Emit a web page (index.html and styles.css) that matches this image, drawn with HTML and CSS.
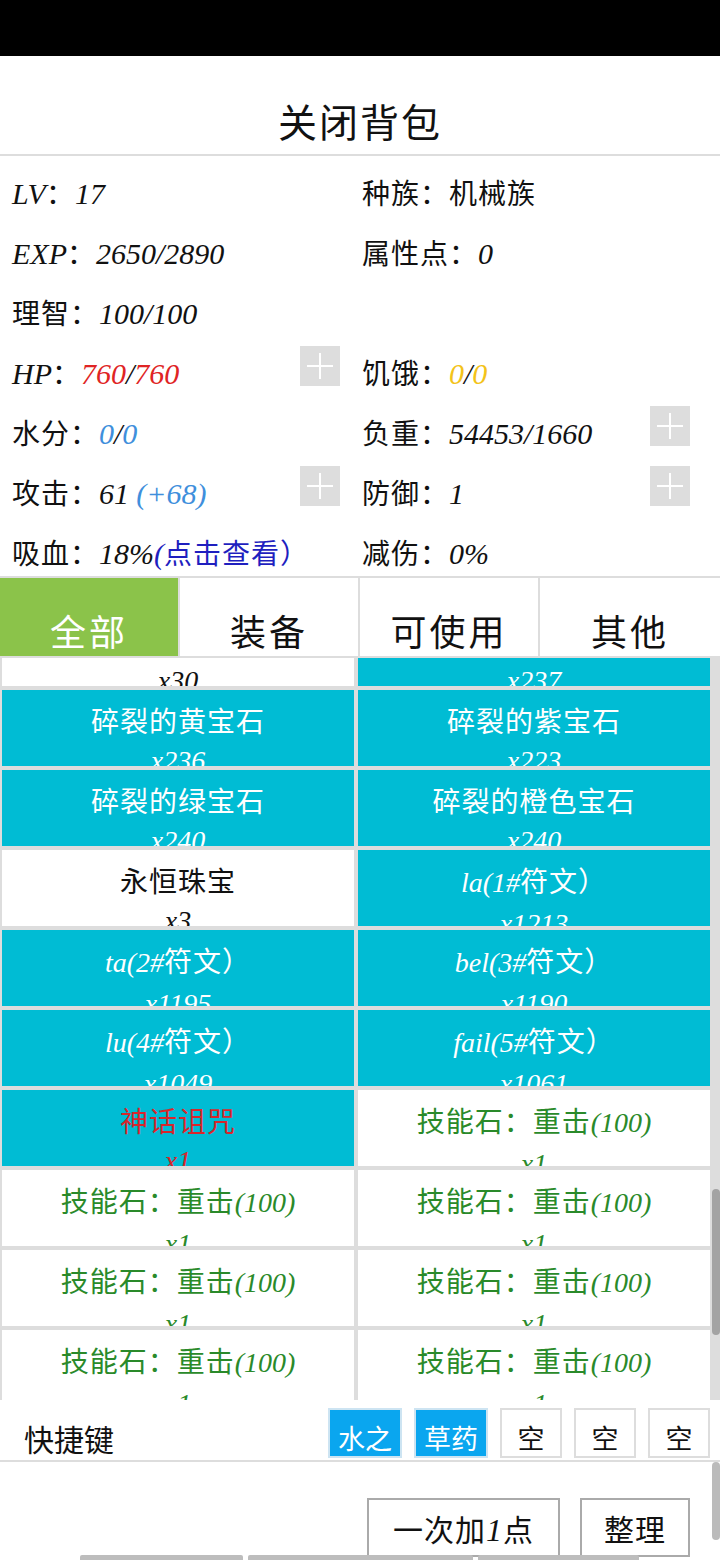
FILE: index.html
```html
<!DOCTYPE html>
<html lang="zh-CN">
<head>
  <meta charset="UTF-8">
  <title>背包</title>
  <link rel="stylesheet" href="styles.css">
</head>
<body>

<div class="statusbar"></div>

<div class="title">关闭背包</div>

<div class="stats">
  <div class="stat"><span class="text"><i>LV</i>：<i>17</i></span></div>
  <div class="stat right"><span class="text">种族：机械族</span></div>

  <div class="stat"><span class="text"><i>EXP</i>：<i>2650/2890</i></span></div>
  <div class="stat right"><span class="text">属性点：<i>0</i></span></div>

  <div class="stat"><span class="text">理智：<i>100/100</i></span></div>
  <div class="stat right"></div>

  <div class="stat">
    <span class="text"><i>HP</i>：<i class="red">760</i><i>/</i><i class="red">760</i></span>
    <span class="plus"><svg viewBox="0 0 40 40"><path d="M20 7v26M7 20h26" stroke="#fff" stroke-width="2"/></svg></span>
  </div>
  <div class="stat right"><span class="text">饥饿：<i class="yellow">0</i><i>/</i><i class="yellow">0</i></span></div>

  <div class="stat"><span class="text">水分：<i class="blue">0</i><i>/</i><i class="blue">0</i></span></div>
  <div class="stat right">
    <span class="text">负重：<i>54453/1660</i></span>
    <span class="plus"><svg viewBox="0 0 40 40"><path d="M20 7v26M7 20h26" stroke="#fff" stroke-width="2"/></svg></span>
  </div>

  <div class="stat">
    <span class="text">攻击：<i>61</i> <i class="blue">(+68)</i></span>
    <span class="plus"><svg viewBox="0 0 40 40"><path d="M20 7v26M7 20h26" stroke="#fff" stroke-width="2"/></svg></span>
  </div>
  <div class="stat right">
    <span class="text">防御：<i>1</i></span>
    <span class="plus"><svg viewBox="0 0 40 40"><path d="M20 7v26M7 20h26" stroke="#fff" stroke-width="2"/></svg></span>
  </div>

  <div class="stat"><span class="text">吸血：<i>18%</i><span class="link"><i>(</i>点击查看）</span></span></div>
  <div class="stat right"><span class="text">减伤：<i>0%</i></span></div>
</div>

<div class="tabs">
  <div class="tab active">全部</div>
  <div class="tab">装备</div>
  <div class="tab">可使用</div>
  <div class="tab">其他</div>
</div>

<div class="list-wrap">
  <div class="list" id="itemList"></div>
  <div class="track"><div class="thumb" id="listThumb"></div></div>
</div>

<div class="hotkeys">
  <span class="hotkey-label">快捷键</span>
  <span class="key on">水之</span>
  <span class="key on">草药</span>
  <span class="key">空</span>
  <span class="key">空</span>
  <span class="key">空</span>
</div>

<div class="bottom-wrap">
  <div class="bottom" id="bottomPane">
    <div class="actions">
      <button class="btn">一次加<i>1</i>点</button>
      <button class="btn short">整理</button>
    </div>
    <div class="bars">
      <span class="bar b1"></span>
      <span class="bar b2"></span>
      <span class="bar b3"></span>
    </div>
  </div>
  <div class="track"><div class="thumb light" id="bottomThumb"></div></div>
</div>

<script>
const items = [];

// 前面的物品（已滚动出视野）
const older = ["技能石：重击(100)", "技能石：格挡(100)", "技能石：闪避(100)"];
for (let i = 0; i < 66; i++) {
  items.push({ name: older[i % 3], count: 1, cls: "skill" });
}

items.push(
  { name: "强化石", count: 30, cls: "plain" },
  { name: "碎裂的红宝石", count: 237, cls: "gem" },
  { name: "碎裂的黄宝石", count: 236, cls: "gem" },
  { name: "碎裂的紫宝石", count: 223, cls: "gem" },
  { name: "碎裂的绿宝石", count: 240, cls: "gem" },
  { name: "碎裂的橙色宝石", count: 240, cls: "gem" },
  { name: "永恒珠宝", count: 3, cls: "plain" },
  { name: "la(1#符文）", count: 1213, cls: "gem" },
  { name: "ta(2#符文）", count: 1195, cls: "gem" },
  { name: "bel(3#符文）", count: 1190, cls: "gem" },
  { name: "lu(4#符文）", count: 1049, cls: "gem" },
  { name: "fail(5#符文）", count: 1061, cls: "gem" },
  { name: "神话诅咒", count: 1, cls: "curse" }
);

for (let i = 0; i < 15; i++) {
  items.push({ name: "技能石：重击(100)", count: 1, cls: "skill" });
}

function latin(text) {
  return text.replace(/[A-Za-z0-9#()%+\/]+/g, "<i>$&</i>");
}

const list = document.getElementById("itemList");
items.forEach(item => {
  const cell = document.createElement("div");
  cell.className = "cell " + item.cls;
  cell.innerHTML = `<div class="name">${latin(item.name)}</div><div class="count"><i>x${item.count}</i></div>`;
  list.appendChild(cell);
});

function syncThumb(pane, thumb) {
  const track = thumb.parentNode.clientHeight;
  const size = Math.round(track * pane.clientHeight / pane.scrollHeight);
  const range = pane.scrollHeight - pane.clientHeight;
  const top = range > 0 ? Math.round(pane.scrollTop / range * (track - size)) : 0;
  thumb.style.height = size + "px";
  thumb.style.top = top + "px";
}

// 停在上次浏览的位置
list.scrollTop = list.children[66].offsetTop + 48;
syncThumb(list, document.getElementById("listThumb"));
syncThumb(document.getElementById("bottomPane"), document.getElementById("bottomThumb"));
</script>

</body>
</html>
```

FILE: styles.css
```css
* { box-sizing: border-box; }
html, body { margin: 0; overflow: hidden; }
body { width: 720px; height: 1560px; display: flex; flex-direction: column; font-family: "Noto Sans CJK SC", sans-serif; color: #111; background: #fff; }
i { font-family: "Liberation Serif", "Noto Sans CJK SC", serif; font-style: italic; }

.statusbar { flex: none; height: 56px; background: #000; }

.title { flex: none; height: 100px; padding-top: 30px; display: flex; align-items: center; justify-content: center; font-size: 39px; letter-spacing: 2px; border-bottom: 2px solid #ddd; }

.stats { flex: none; height: 422px; display: grid; grid-template-columns: 360px 360px; grid-auto-rows: 60px; border-bottom: 2px solid #ddd; }
.stat { display: flex; align-items: center; justify-content: space-between; padding: 0 20px 0 12px; font-size: 28px; letter-spacing: 1px; }
.stat.right { padding: 0 30px 0 2px; }
.stat .text { padding-top: 12px; white-space: nowrap; }
.stat i { font-size: 30px; letter-spacing: 0; }
.plus { width: 40px; height: 40px; background: #ddd; }
.plus svg { display: block; width: 40px; height: 40px; }
.red { color: #e02424; }
.yellow { color: #f3c31a; }
.blue { color: #3f8fdc; }
.link { color: #1f1fbf; }

.tabs { flex: none; height: 80px; display: grid; grid-template-columns: repeat(4, 1fr); border-bottom: 2px solid #ddd; }
.tab { display: flex; align-items: flex-end; justify-content: center; font-size: 36px; letter-spacing: 3px; border-right: 2px solid #ddd; }
.tab:last-child { border-right: none; }
.tab.active { background: #8bc34a; color: #fff; }

.list-wrap { flex: none; height: 742px; display: flex; background: #ddd; }
.list { flex: 1; overflow-y: auto; scrollbar-width: none; display: grid; grid-template-columns: 1fr 1fr; grid-auto-rows: 76px; gap: 4px; align-content: start; padding: 4px 2px; position: relative; }
.list::-webkit-scrollbar { display: none; }
.track { flex: none; width: 8px; position: relative; }
.thumb { position: absolute; left: 0; right: 0; background: #a3a3a3; border-radius: 4px; }
.thumb.light { background: #bbb; }
.cell { overflow: hidden; padding-top: 11px; text-align: center; font-size: 28px; line-height: 38px; letter-spacing: 1px; background: #fff; }
.cell i { letter-spacing: 0; }
.gem { background: #00bcd4; color: #fff; }
.plain { color: #111; }
.skill { color: #2a8a2a; }
.curse { background: #00bcd4; color: #d8262b; }

.hotkeys { flex: none; height: 62px; display: flex; align-items: flex-end; gap: 12px; padding: 8px 10px 2px 24px; border-bottom: 2px solid #ddd; }
.hotkey-label { margin-right: auto; font-size: 30px; line-height: 40px; }
.key { height: 50px; min-width: 62px; padding: 0 8px; display: flex; align-items: flex-end; justify-content: center; font-size: 27px; line-height: 36px; border: 2px solid #ddd; }
.key.on { background: #0aa6ef; color: #fff; border-color: #cde4f2; }

.bottom-wrap { flex: 1; display: flex; min-height: 0; }
.bottom { flex: 1; overflow-y: auto; scrollbar-width: none; }
.bottom::-webkit-scrollbar { display: none; }
.actions { display: flex; justify-content: flex-end; gap: 20px; padding: 36px 22px 0 0; }
.btn { height: 59px; padding: 0 24px; background: #fff; color: #111; border: 2px solid #aaa; font-family: "Noto Sans CJK SC", sans-serif; font-size: 30px; letter-spacing: 1px; }
.btn.short { padding: 0 22px; }
.btn i { font-size: 32px; }
.bars { display: flex; gap: 5px; margin: -2px 0 0 80px; padding-bottom: 20px; }
.bar { height: 10px; background: #bdbdbd; border-radius: 2px 2px 0 0; }
.b1 { width: 163px; }
.b2 { width: 225px; }
.b3 { width: 161px; }
```
